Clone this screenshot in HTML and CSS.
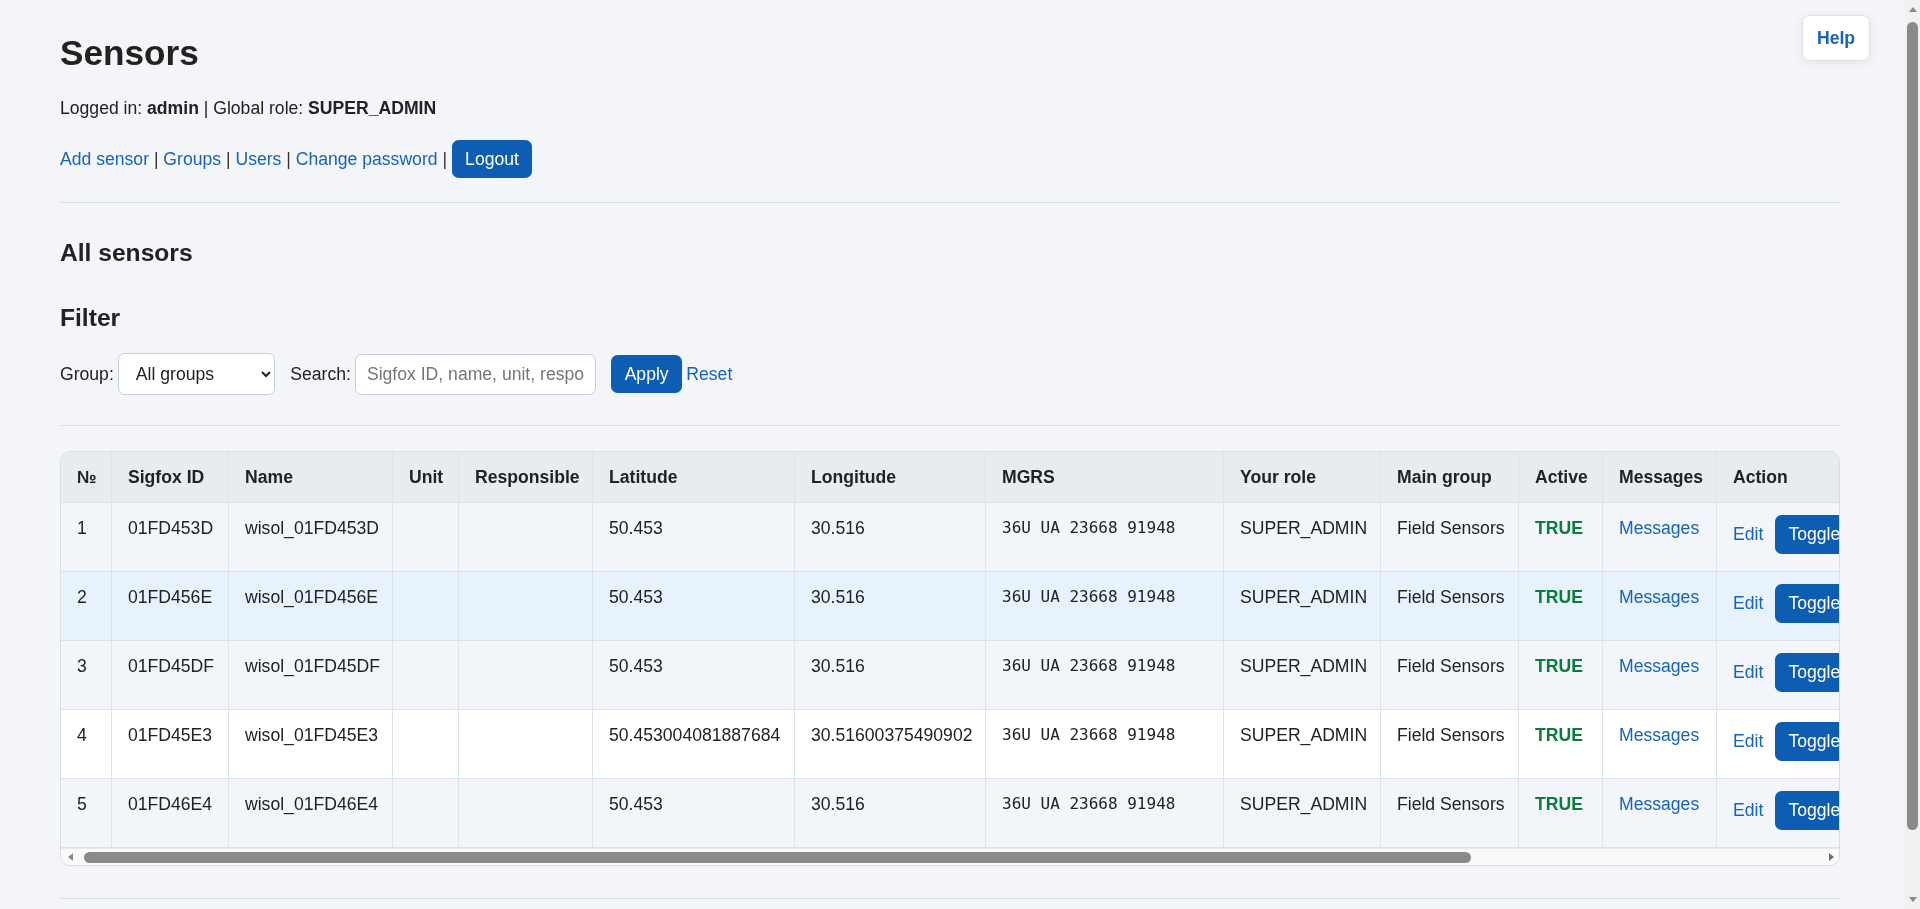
FILE: index.html
```html
<!DOCTYPE html>
<html lang="en">
<head>
<meta charset="utf-8">
<title>Sensors</title>
<link rel="stylesheet" href="styles.css">
</head>
<body>
<a class="help-btn" href="#help">Help</a>
<div class="page-scrollbar" aria-hidden="true">
  <span class="arrow arrow-up"></span>
  <span class="vthumb"></span>
  <span class="vspacer"></span>
  <span class="arrow arrow-down"></span>
</div>
<main class="page">
  <header class="page-header">
    <h1 class="page-title">Sensors</h1>
    <p class="user-line">Logged in: <b>admin</b> | Global role: <b>SUPER_ADMIN</b></p>
    <p class="nav-line">
      <a href="#add">Add sensor</a> | <a href="#groups">Groups</a> | <a href="#users">Users</a> | <a href="#password">Change password</a> | <button class="btn" type="button">Logout</button>
    </p>
  </header>
  <hr class="divider divider-top">

  <section class="sensors">
    <h2 class="section-title">All sensors</h2>
    <h2 class="section-title filter-title">Filter</h2>
    <form class="filter-form">
      <label class="field">Group:
        <select class="select">
          <option>All groups</option>
        </select>
      </label>
      <label class="field">Search:
        <input class="input" type="text" placeholder="Sigfox ID, name, unit, responsible">
      </label>
      <span class="filter-actions">
        <button class="btn" type="button">Apply</button>
        <a href="#reset">Reset</a>
      </span>
    </form>
    <hr class="divider divider-mid">

    <div class="table-wrap">
      <table class="sensor-table">
        <thead>
          <tr>
            <th class="c-num">№</th>
            <th class="c-id">Sigfox ID</th>
            <th class="c-name">Name</th>
            <th class="c-unit">Unit</th>
            <th class="c-resp">Responsible</th>
            <th class="c-lat">Latitude</th>
            <th class="c-lon">Longitude</th>
            <th class="c-mgrs">MGRS</th>
            <th class="c-role">Your role</th>
            <th class="c-group">Main group</th>
            <th class="c-active">Active</th>
            <th class="c-msg">Messages</th>
            <th class="c-action">Action</th>
          </tr>
        </thead>
        <tbody>
          <tr>
            <td>1</td><td>01FD453D</td><td>wisol_01FD453D</td><td></td><td></td>
            <td>50.453</td><td>30.516</td><td class="mono">36U UA 23668 91948</td>
            <td>SUPER_ADMIN</td><td>Field Sensors</td><td class="ok">TRUE</td>
            <td><a href="#m1">Messages</a></td>
            <td><a href="#e1">Edit</a> <button class="btn btn-row" type="button">Toggle active</button> <button class="btn btn-row" type="button">Delete</button></td>
          </tr>
          <tr class="is-hovered">
            <td>2</td><td>01FD456E</td><td>wisol_01FD456E</td><td></td><td></td>
            <td>50.453</td><td>30.516</td><td class="mono">36U UA 23668 91948</td>
            <td>SUPER_ADMIN</td><td>Field Sensors</td><td class="ok">TRUE</td>
            <td><a href="#m2">Messages</a></td>
            <td><a href="#e2">Edit</a> <button class="btn btn-row" type="button">Toggle active</button> <button class="btn btn-row" type="button">Delete</button></td>
          </tr>
          <tr>
            <td>3</td><td>01FD45DF</td><td>wisol_01FD45DF</td><td></td><td></td>
            <td>50.453</td><td>30.516</td><td class="mono">36U UA 23668 91948</td>
            <td>SUPER_ADMIN</td><td>Field Sensors</td><td class="ok">TRUE</td>
            <td><a href="#m3">Messages</a></td>
            <td><a href="#e3">Edit</a> <button class="btn btn-row" type="button">Toggle active</button> <button class="btn btn-row" type="button">Delete</button></td>
          </tr>
          <tr>
            <td>4</td><td>01FD45E3</td><td>wisol_01FD45E3</td><td></td><td></td>
            <td>50.453004081887684</td><td>30.51600375490902</td><td class="mono">36U UA 23668 91948</td>
            <td>SUPER_ADMIN</td><td>Field Sensors</td><td class="ok">TRUE</td>
            <td><a href="#m4">Messages</a></td>
            <td><a href="#e4">Edit</a> <button class="btn btn-row" type="button">Toggle active</button> <button class="btn btn-row" type="button">Delete</button></td>
          </tr>
          <tr>
            <td>5</td><td>01FD46E4</td><td>wisol_01FD46E4</td><td></td><td></td>
            <td>50.453</td><td>30.516</td><td class="mono">36U UA 23668 91948</td>
            <td>SUPER_ADMIN</td><td>Field Sensors</td><td class="ok">TRUE</td>
            <td><a href="#m5">Messages</a></td>
            <td><a href="#e5">Edit</a> <button class="btn btn-row" type="button">Toggle active</button> <button class="btn btn-row" type="button">Delete</button></td>
          </tr>
        </tbody>
      </table>
      <div class="hscroll" aria-hidden="true">
        <span class="arrow arrow-left"></span>
        <span class="hthumb"></span>
        <span class="hspacer"></span>
        <span class="arrow arrow-right"></span>
      </div>
    </div>
    <hr class="divider divider-bottom">
  </section>
</main>
</body>
</html>
```
FILE: styles.css
```css
html {
  background: #f4f5f8;
}
body {
  margin: 0;
  font-family: "Liberation Sans", Arial, sans-serif;
  font-size: 17.6px;
  line-height: 26.4px;
  color: #222;
  background: #f4f5f8;
}
a {
  color: #1763b8;
  text-decoration: none;
}
.page {
  width: 1780px;
  margin-left: 60px;
  padding: 32.4px 0 84px;
}
.page-title {
  margin: 0 0 21px;
  font-size: 35.2px;
  line-height: 42px;
  font-weight: 700;
  color: #222;
}
.user-line {
  margin: 0;
}
.nav-line {
  margin: 18px 0 0;
  color: #333;
}
.btn {
  font-family: "Liberation Sans", Arial, sans-serif;
  font-size: 17.6px;
  color: #fff;
  background: #0d5db2;
  border: 0;
  border-radius: 6.6px;
  padding: 8.8px 13.2px;
  cursor: pointer;
}
.divider {
  border: 0;
  border-top: 1px solid #d8dde4;
  margin: 0;
  height: 0;
}
.divider-top { margin-top: 24px; }
.section-title {
  margin: 34.4px 0 0;
  font-size: 24.6px;
  line-height: 29.6px;
  font-weight: 700;
  color: #222;
}
.filter-title { margin-top: 36px; }
.filter-form {
  margin-top: 20.2px;
  display: flex;
  align-items: center;
  gap: 15.5px;
}
.field {
  display: inline-flex;
  align-items: center;
  gap: 4px;
}
.select,
.input {
  box-sizing: border-box;
  font-family: "Liberation Sans", Arial, sans-serif;
  font-size: 17.6px;
  color: #222;
  background: #fff;
  border: 1px solid #c3cddb;
  border-radius: 6.6px;
}
.select {
  width: 157px;
  height: 42px;
  padding: 0 8px 0 13px;
}
.input {
  width: 241px;
  height: 41px;
  padding: 0 11px;
}
.input::placeholder { color: #767676; }
.filter-actions {
  display: inline-flex;
  align-items: center;
  gap: 4.5px;
}
.divider-mid { margin-top: 30px; }
.table-wrap {
  margin-top: 24.5px;
  border: 1px solid #d8dde4;
  border-radius: 10px;
  overflow-x: auto;
  background: #fff;
}
.sensor-table {
  width: 2242px;
  table-layout: fixed;
  border-collapse: separate;
  border-spacing: 0;
}
.sensor-table th,
.sensor-table td {
  box-sizing: border-box;
  padding: 12.1px 16px;
  text-align: left;
  vertical-align: top;
  white-space: nowrap;
  overflow: hidden;
  border-right: 1px solid #dde2e8;
  border-bottom: 1px solid #dde2e8;
}
.sensor-table th {
  background: #e8ecf1;
  font-weight: 700;
  color: #222;
}
.sensor-table tbody tr { height: 69px; }
.sensor-table tbody tr:nth-child(odd) td { background: #f2f5fa; }
.sensor-table tbody tr:nth-child(even) td { background: #fff; }
.sensor-table tbody tr.is-hovered td { background: #e8f2fd; }
.c-num { width: 51px; }
.c-id { width: 117px; }
.c-name { width: 164px; }
.c-unit { width: 66px; }
.c-resp { width: 134px; }
.c-lat { width: 202px; }
.c-lon { width: 191px; }
.c-mgrs { width: 238px; }
.c-role { width: 157px; }
.c-group { width: 138px; }
.c-active { width: 84px; }
.c-msg { width: 114px; }
.c-action { width: 586px; }
.mono {
  font-family: "DejaVu Sans Mono", "Liberation Mono", monospace;
  font-size: 16px;
}
.ok {
  color: #0b7a3b;
  font-weight: 700;
}
.btn-row { margin-left: 7px; }
.divider-bottom { margin-top: 32px; }

/* scroll indicators (visual) */
.hscroll {
  display: flex;
  align-items: center;
  width: 1778px;
  height: 17px;
  background: #fafafa;
  border-top: 1px solid #e6e9ee;
  box-sizing: border-box;
  padding: 0 5px 0 7px;
}
.hthumb {
  margin-left: 11px;
  width: 1387px;
  height: 11px;
  border-radius: 6px;
  background: #8a8a8a;
}
.hspacer, .vspacer { flex: 1; }
.arrow {
  width: 0;
  height: 0;
  display: block;
}
.arrow-left {
  border-top: 4.5px solid transparent;
  border-bottom: 4.5px solid transparent;
  border-right: 5px solid #8c8c8c;
}
.arrow-right {
  border-top: 4.5px solid transparent;
  border-bottom: 4.5px solid transparent;
  border-left: 5px solid #6f6f6f;
}
.page-scrollbar {
  position: fixed;
  top: 0;
  right: 0;
  bottom: 0;
  width: 15px;
  background: #f1f1f1;
  display: flex;
  flex-direction: column;
  align-items: center;
  padding: 7px 0;
  box-sizing: border-box;
}
.arrow-up {
  border-left: 4.5px solid transparent;
  border-right: 4.5px solid transparent;
  border-bottom: 5px solid #8c8c8c;
}
.arrow-down {
  border-left: 4.5px solid transparent;
  border-right: 4.5px solid transparent;
  border-top: 5px solid #8c8c8c;
}
.vthumb {
  margin-top: 10px;
  width: 11px;
  height: 808px;
  border-radius: 6px;
  background: #8a8a8a;
}
.help-btn {
  position: fixed;
  top: 15px;
  right: 50px;
  box-sizing: border-box;
  width: 68px;
  height: 46px;
  display: flex;
  align-items: center;
  justify-content: center;
  background: #fff;
  border: 1px solid #dde1e7;
  border-radius: 8px;
  box-shadow: 0 2px 8px rgba(20, 30, 50, 0.08);
  font-weight: 700;
  color: #1763b8;
}
```
